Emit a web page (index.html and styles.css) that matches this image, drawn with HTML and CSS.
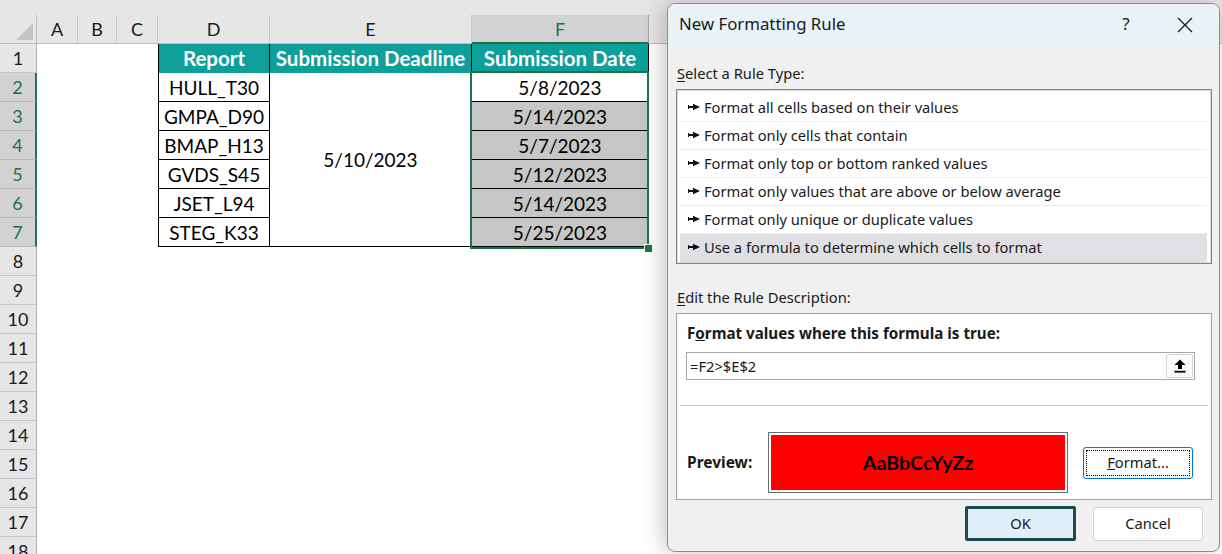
FILE: index.html
```html
<!DOCTYPE html>
<html>
<head>
<meta charset="utf-8">
<link rel="stylesheet" href="styles.css">
</head>
<body>
<div class="sheet">
  <div class="topstrip"></div>
  <div class="grid">
    <div class="corner"><svg width="20" height="20" viewBox="0 0 20 20"><path d="M19 2 L19 19 L2 19 Z" fill="#c4c4c4"/></svg></div>
    <div class="ch">A</div>
    <div class="ch">B</div>
    <div class="ch">C</div>
    <div class="ch">D</div>
    <div class="ch">E</div>
    <div class="ch chsel">F</div>
    <div class="chrest"></div>

    <div class="rh">1</div>
    <div class="e"></div><div class="e"></div><div class="e"></div>
    <div class="c hd d">Report</div>
    <div class="c hd">Submission Deadline</div>
    <div class="c hd">Submission Date</div>
    <div class="e"></div>

    <div class="rh rsel">2</div>
    <div class="e"></div><div class="e"></div><div class="e"></div>
    <div class="c d">HULL_T30</div>
    <div class="c merged">5/10/2023</div>
    <div class="c f">5/8/2023</div>
    <div class="e"></div>

    <div class="rh rsel">3</div>
    <div class="e"></div><div class="e"></div><div class="e"></div>
    <div class="c d">GMPA_D90</div>
    <div class="c f shade">5/14/2023</div>
    <div class="e"></div>

    <div class="rh rsel">4</div>
    <div class="e"></div><div class="e"></div><div class="e"></div>
    <div class="c d">BMAP_H13</div>
    <div class="c f shade">5/7/2023</div>
    <div class="e"></div>

    <div class="rh rsel">5</div>
    <div class="e"></div><div class="e"></div><div class="e"></div>
    <div class="c d">GVDS_S45</div>
    <div class="c f shade">5/12/2023</div>
    <div class="e"></div>

    <div class="rh rsel">6</div>
    <div class="e"></div><div class="e"></div><div class="e"></div>
    <div class="c d">JSET_L94</div>
    <div class="c f shade">5/14/2023</div>
    <div class="e"></div>

    <div class="rh rsel">7</div>
    <div class="e"></div><div class="e"></div><div class="e"></div>
    <div class="c d">STEG_K33</div>
    <div class="c f shade">5/25/2023</div>
    <div class="e"></div>

    <div class="rh">8</div><div class="blank"></div>
    <div class="rh">9</div><div class="blank"></div>
    <div class="rh">10</div><div class="blank"></div>
    <div class="rh">11</div><div class="blank"></div>
    <div class="rh">12</div><div class="blank"></div>
    <div class="rh">13</div><div class="blank"></div>
    <div class="rh">14</div><div class="blank"></div>
    <div class="rh">15</div><div class="blank"></div>
    <div class="rh">16</div><div class="blank"></div>
    <div class="rh">17</div><div class="blank"></div>
    <div class="rh">18</div><div class="blank"></div>
  </div>
  <div class="selection"><div class="handle"></div></div>
</div>

<div class="dialog">
  <div class="titlebar">
    <span class="title">New Formatting Rule</span>
    <span class="help">?</span>
    <span class="close"><svg width="16" height="16" viewBox="0 0 16 16"><path d="M1 1 L15 15 M15 1 L1 15" stroke="#1a1a1a" stroke-width="1.3" fill="none"/></svg></span>
  </div>
  <div class="dbody">
    <div class="label"><u>S</u>elect a Rule Type:</div>
    <div class="listbox">
      <div class="item"><svg class="arr" width="12" height="8" viewBox="0 0 12 8"><rect x="0" y="3" width="6" height="2" fill="#111"/><rect x="0" y="2" width="1" height="4" fill="#111"/><path d="M5 0.8 L12 4 L5 7.2 Z" fill="#111"/></svg>Format all cells based on their values</div>
      <div class="item"><svg class="arr" width="12" height="8" viewBox="0 0 12 8"><rect x="0" y="3" width="6" height="2" fill="#111"/><rect x="0" y="2" width="1" height="4" fill="#111"/><path d="M5 0.8 L12 4 L5 7.2 Z" fill="#111"/></svg>Format only cells that contain</div>
      <div class="item"><svg class="arr" width="12" height="8" viewBox="0 0 12 8"><rect x="0" y="3" width="6" height="2" fill="#111"/><rect x="0" y="2" width="1" height="4" fill="#111"/><path d="M5 0.8 L12 4 L5 7.2 Z" fill="#111"/></svg>Format only top or bottom ranked values</div>
      <div class="item"><svg class="arr" width="12" height="8" viewBox="0 0 12 8"><rect x="0" y="3" width="6" height="2" fill="#111"/><rect x="0" y="2" width="1" height="4" fill="#111"/><path d="M5 0.8 L12 4 L5 7.2 Z" fill="#111"/></svg>Format only values that are above or below average</div>
      <div class="item"><svg class="arr" width="12" height="8" viewBox="0 0 12 8"><rect x="0" y="3" width="6" height="2" fill="#111"/><rect x="0" y="2" width="1" height="4" fill="#111"/><path d="M5 0.8 L12 4 L5 7.2 Z" fill="#111"/></svg>Format only unique or duplicate values</div>
      <div class="item selected"><svg class="arr" width="12" height="8" viewBox="0 0 12 8"><rect x="0" y="3" width="6" height="2" fill="#111"/><rect x="0" y="2" width="1" height="4" fill="#111"/><path d="M5 0.8 L12 4 L5 7.2 Z" fill="#111"/></svg>Use a formula to determine which cells to format</div>
    </div>
    <div class="label label2"><u>E</u>dit the Rule Description:</div>
    <div class="desc">
      <div class="blabel">F<u>o</u>rmat values where this formula is true:</div>
      <div class="input">
        <span class="formula">=F2&gt;$E$2</span>
        <span class="refbtn"><svg width="12" height="14" viewBox="0 0 12 14"><path d="M6 0.5 L11.5 6 H8 V10 H4 V6 H0.5 Z" fill="#000"/><rect x="0.5" y="11.8" width="11" height="1.8" fill="#000"/></svg></span>
      </div>
      <div class="sep"></div>
      <div class="previewrow">
        <span class="plabel">Preview:</span>
        <div class="preview"><div class="pfill">AaBbCcYyZz</div></div>
        <div class="fmtbtn"><span class="focus"><u>F</u>ormat...</span></div>
      </div>
    </div>
    <div class="buttons">
      <div class="btn ok">OK</div>
      <div class="btn cancel">Cancel</div>
    </div>
  </div>
</div>
</body>
</html>
```

FILE: styles.css
```css
body {
  margin: 0;
  width: 1222px;
  height: 554px;
  overflow: hidden;
  background: #ffffff;
  position: relative;
  font-family: Lato, "Liberation Sans", sans-serif;
}

.sheet {
  position: relative;
}

.topstrip {
  height: 15px;
  background: #e6e6e6;
}

.grid {
  display: grid;
  grid-template-columns: 37px 41px 39px 41px 112px 202px 177px 1fr;
  grid-auto-rows: 29px;
}

.corner {
  background: #e6e6e6;
  border-right: 1px solid #bdbdbd;
  border-bottom: 1px solid #bdbdbd;
  box-sizing: border-box;
  display: flex;
  align-items: flex-end;
  justify-content: flex-end;
  padding: 0 2px 2px 0;
}

.ch {
  background: #e6e6e6;
  border-right: 1px solid #c6c6c6;
  border-bottom: 1px solid #bdbdbd;
  box-sizing: border-box;
  display: flex;
  align-items: center;
  justify-content: center;
  font-size: 18px;
  color: #1a1a1a;
}

.chsel {
  background: #d2d2d2;
  color: #217346;
  border-bottom: 2px solid #217346;
  border-right: 1px solid #a8a8a8;
}

.chrest {
  background: #e6e6e6;
  border-bottom: 1px solid #bdbdbd;
}

.rh {
  background: #e6e6e6;
  border-right: 1px solid #b0b0b0;
  border-bottom: 1px solid #c6c6c6;
  box-sizing: border-box;
  display: flex;
  align-items: center;
  justify-content: center;
  font-size: 18px;
  color: #1a1a1a;
  overflow: hidden;
}

.rsel {
  background: #d2d2d2;
  color: #217346;
  border-right: 2px solid #217346;
  border-bottom: 1px solid #b8b8b8;
}

.e {
  background: #ffffff;
}

.blank {
  grid-column: span 7;
  background: #ffffff;
}

.c {
  display: flex;
  align-items: center;
  justify-content: center;
  box-sizing: border-box;
  font-size: 19px;
  color: #000;
  border-right: 1px solid #000;
  border-bottom: 1px solid #000;
  white-space: nowrap;
}

.d {
  border-left: 1px solid #000;
}

.hd {
  background: #0e9f9a;
  color: #ffffff;
  font-weight: 700;
  font-size: 20.5px;
  border-bottom: 1px solid #0e9f9a;
}

.merged {
  grid-row: span 6;
}

.shade {
  background: #c6c6c6;
}

.selection {
  position: absolute;
  left: 470px;
  top: 71px;
  width: 175px;
  height: 174px;
  border: 2px solid #217346;
}

.handle {
  position: absolute;
  right: -6px;
  bottom: -6px;
  width: 7px;
  height: 7px;
  background: #217346;
  border: 1px solid #ffffff;
}

/* Dialog */
.dialog {
  position: absolute;
  left: 667px;
  top: 3px;
  width: 553px;
  height: 549px;
  box-sizing: border-box;
  border: 1px solid #8d8d8d;
  border-radius: 8px;
  overflow: hidden;
  background: #f0f0f0;
  box-shadow: -4px 0 22px rgba(0, 0, 0, 0.22);
  font-family: "Noto Sans", "Open Sans", sans-serif;
  color: #1a1a1a;
}

.titlebar {
  height: 42px;
  box-sizing: border-box;
  padding-bottom: 3px;
  background: #e9f3f7;
  display: flex;
  align-items: center;
  padding-left: 11px;
}

.title {
  font-size: 16.8px;
  flex: 1;
}

.help {
  font-size: 17px;
  width: 30px;
  text-align: center;
  margin-right: 36px;
}

.close {
  width: 16px;
  height: 16px;
  margin-right: 26px;
  display: flex;
  margin-top: 3px;
}

.dbody {
  padding: 0 7px 0 8px;
}

.label {
  margin-top: 18px;
  height: 20px;
  line-height: 18px;
  font-size: 14.7px;
  padding-left: 1px;
}

.label u {
  text-underline-offset: 2px;
}

.label2 {
  margin-top: 24px;
}

.listbox {
  margin-top: 5px;
  height: 175px;
  box-sizing: border-box;
  border: 1px solid #828282;
  box-shadow: inset 0 0 0 1px #dcdcdc;
  background: #ffffff;
  padding: 4px 4px 1px 3px;
}

.item {
  height: 28px;
  box-sizing: border-box;
  border-bottom: 1px solid #ececec;
  display: flex;
  align-items: center;
  padding-left: 8px;
  padding-bottom: 2px;
  font-size: 14.7px;
  white-space: nowrap;
}

.item.selected {
  background: #e0e0e4;
  border-bottom: none;
}

.arr {
  margin-right: 4px;
  flex: none;
}

.desc {
  margin-top: 5px;
  height: 187px;
  box-sizing: border-box;
  border: 1px solid #a0a0a0;
  background: #ffffff;
  padding: 10px 16px 0 9px;
}

.blabel {
  font-weight: 700;
  font-size: 15.2px;
  height: 20px;
  line-height: 18px;
  padding-left: 1px;
}

.input {
  margin-top: 8px;
  height: 28px;
  box-sizing: border-box;
  border: 1px solid #a8a8a8;
  display: flex;
  align-items: center;
  justify-content: space-between;
  padding: 0 1px 0 3px;
  font-size: 14.7px;
}

.refbtn {
  width: 27px;
  height: 24px;
  box-sizing: border-box;
  border: 1px solid #d4d4d4;
  border-radius: 2px;
  background: #fbfbfb;
  display: flex;
  align-items: center;
  justify-content: center;
}

.sep {
  margin: 25px -13px 0 -6px;
  height: 1px;
  background: #c8c8c8;
}

.previewrow {
  margin-top: 26px;
  display: flex;
  align-items: center;
}

.plabel {
  width: 81px;
  font-weight: 700;
  font-size: 15.5px;
  padding-left: 1px;
  padding-bottom: 2px;
}

.preview {
  width: 300px;
  height: 61px;
  box-sizing: border-box;
  border: 1px solid #6e6e6e;
  padding: 2px;
  background: #ffffff;
}

.pfill {
  height: 100%;
  background: #ff0000;
  display: flex;
  align-items: center;
  justify-content: center;
  font-family: Lato, "Liberation Sans", sans-serif;
  font-weight: 700;
  font-size: 19.7px;
  color: #000;
}

.fmtbtn {
  margin-left: 15px;
  width: 110px;
  height: 32px;
  box-sizing: border-box;
  border: 1px solid #0078d4;
  border-radius: 3px;
  background: #fdfdfd;
  padding: 2px;
  display: flex;
}

.focus {
  flex: 1;
  border: 1px dotted #000;
  display: flex;
  align-items: center;
  justify-content: center;
  font-size: 14.7px;
  padding-bottom: 2px;
}

.buttons {
  margin-top: 6px;
  display: flex;
  justify-content: flex-end;
  gap: 17px;
  padding-right: 9px;
}

.btn {
  width: 110px;
  height: 34px;
  box-sizing: border-box;
  display: flex;
  align-items: center;
  justify-content: center;
  font-size: 14.7px;
  border-radius: 4px;
  padding-bottom: 2px;
}

.ok {
  width: 111px;
  height: 35px;
  background: #e0eef9;
  border: 3px solid #1c4a4f;
  border-radius: 2px;
}

.cancel {
  margin-top: 1px;
  background: #fdfdfd;
  border: 1px solid #d1d1d1;
}
```
